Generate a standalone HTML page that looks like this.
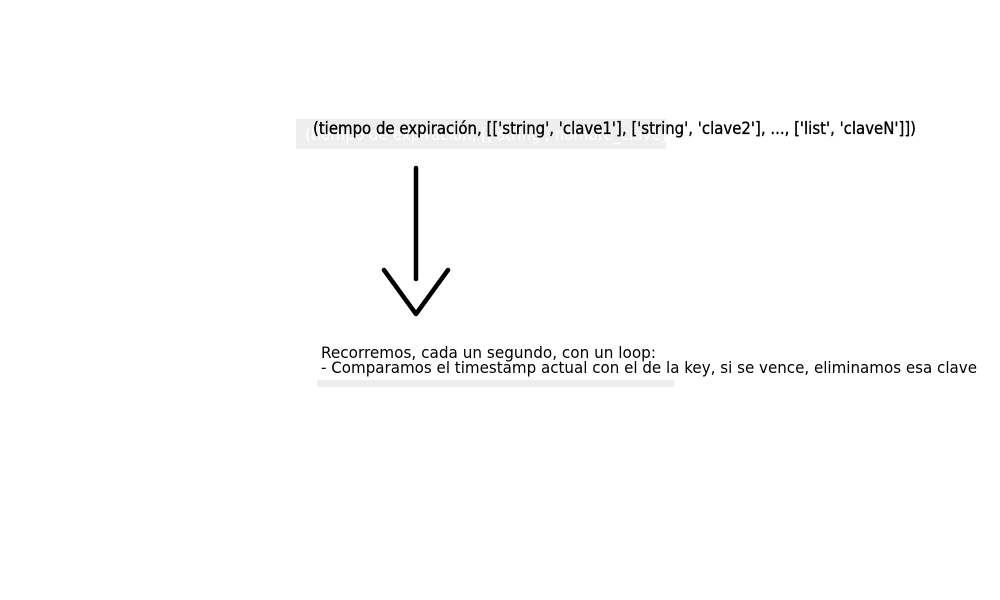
<!DOCTYPE html>
<html><head><meta charset="utf-8"><style>
html,body{margin:0;padding:0;background:#fff;width:1000px;height:600px;overflow:hidden}
</style></head><body>
<svg width="1000" height="600" viewBox="0 0 1000 600" xmlns="http://www.w3.org/2000/svg" font-family="'DejaVu Sans','Liberation Sans',sans-serif">
<rect x="296" y="119" width="370" height="30" fill="#eeeeee"/>
<text x="305" y="140" font-size="17" fill="#ffffff" textLength="695" lengthAdjust="spacingAndGlyphs">(tiempo de expiración, [['string', nombre_clave], ['list', nombre_clave], ['string', nombre_cla</text>
<text x="313" y="134" font-size="16.5" fill="#000" stroke="#000" stroke-width="0.35" textLength="603" lengthAdjust="spacingAndGlyphs">(tiempo de expiración, [['string', 'clave1'], ['string', 'clave2'], ..., ['list', 'claveN']])</text>
<line x1="416" y1="168" x2="416" y2="279" stroke="#000" stroke-width="4.5" stroke-linecap="round"/>
<polyline points="384,270 416,314 448,270" fill="none" stroke="#000" stroke-width="4.5" stroke-linecap="round" stroke-linejoin="round"/>
<text x="321" y="358" font-size="16" fill="#000" textLength="335" lengthAdjust="spacingAndGlyphs">Recorremos, cada un segundo, con un loop:</text>
<text x="321" y="373" font-size="16" fill="#000" textLength="656" lengthAdjust="spacingAndGlyphs">- Comparamos el timestamp actual con el de la key, si se vence, eliminamos esa clave</text>
<rect x="317" y="380" width="357" height="7" fill="#eeeeee"/>
</svg>
</body></html>
